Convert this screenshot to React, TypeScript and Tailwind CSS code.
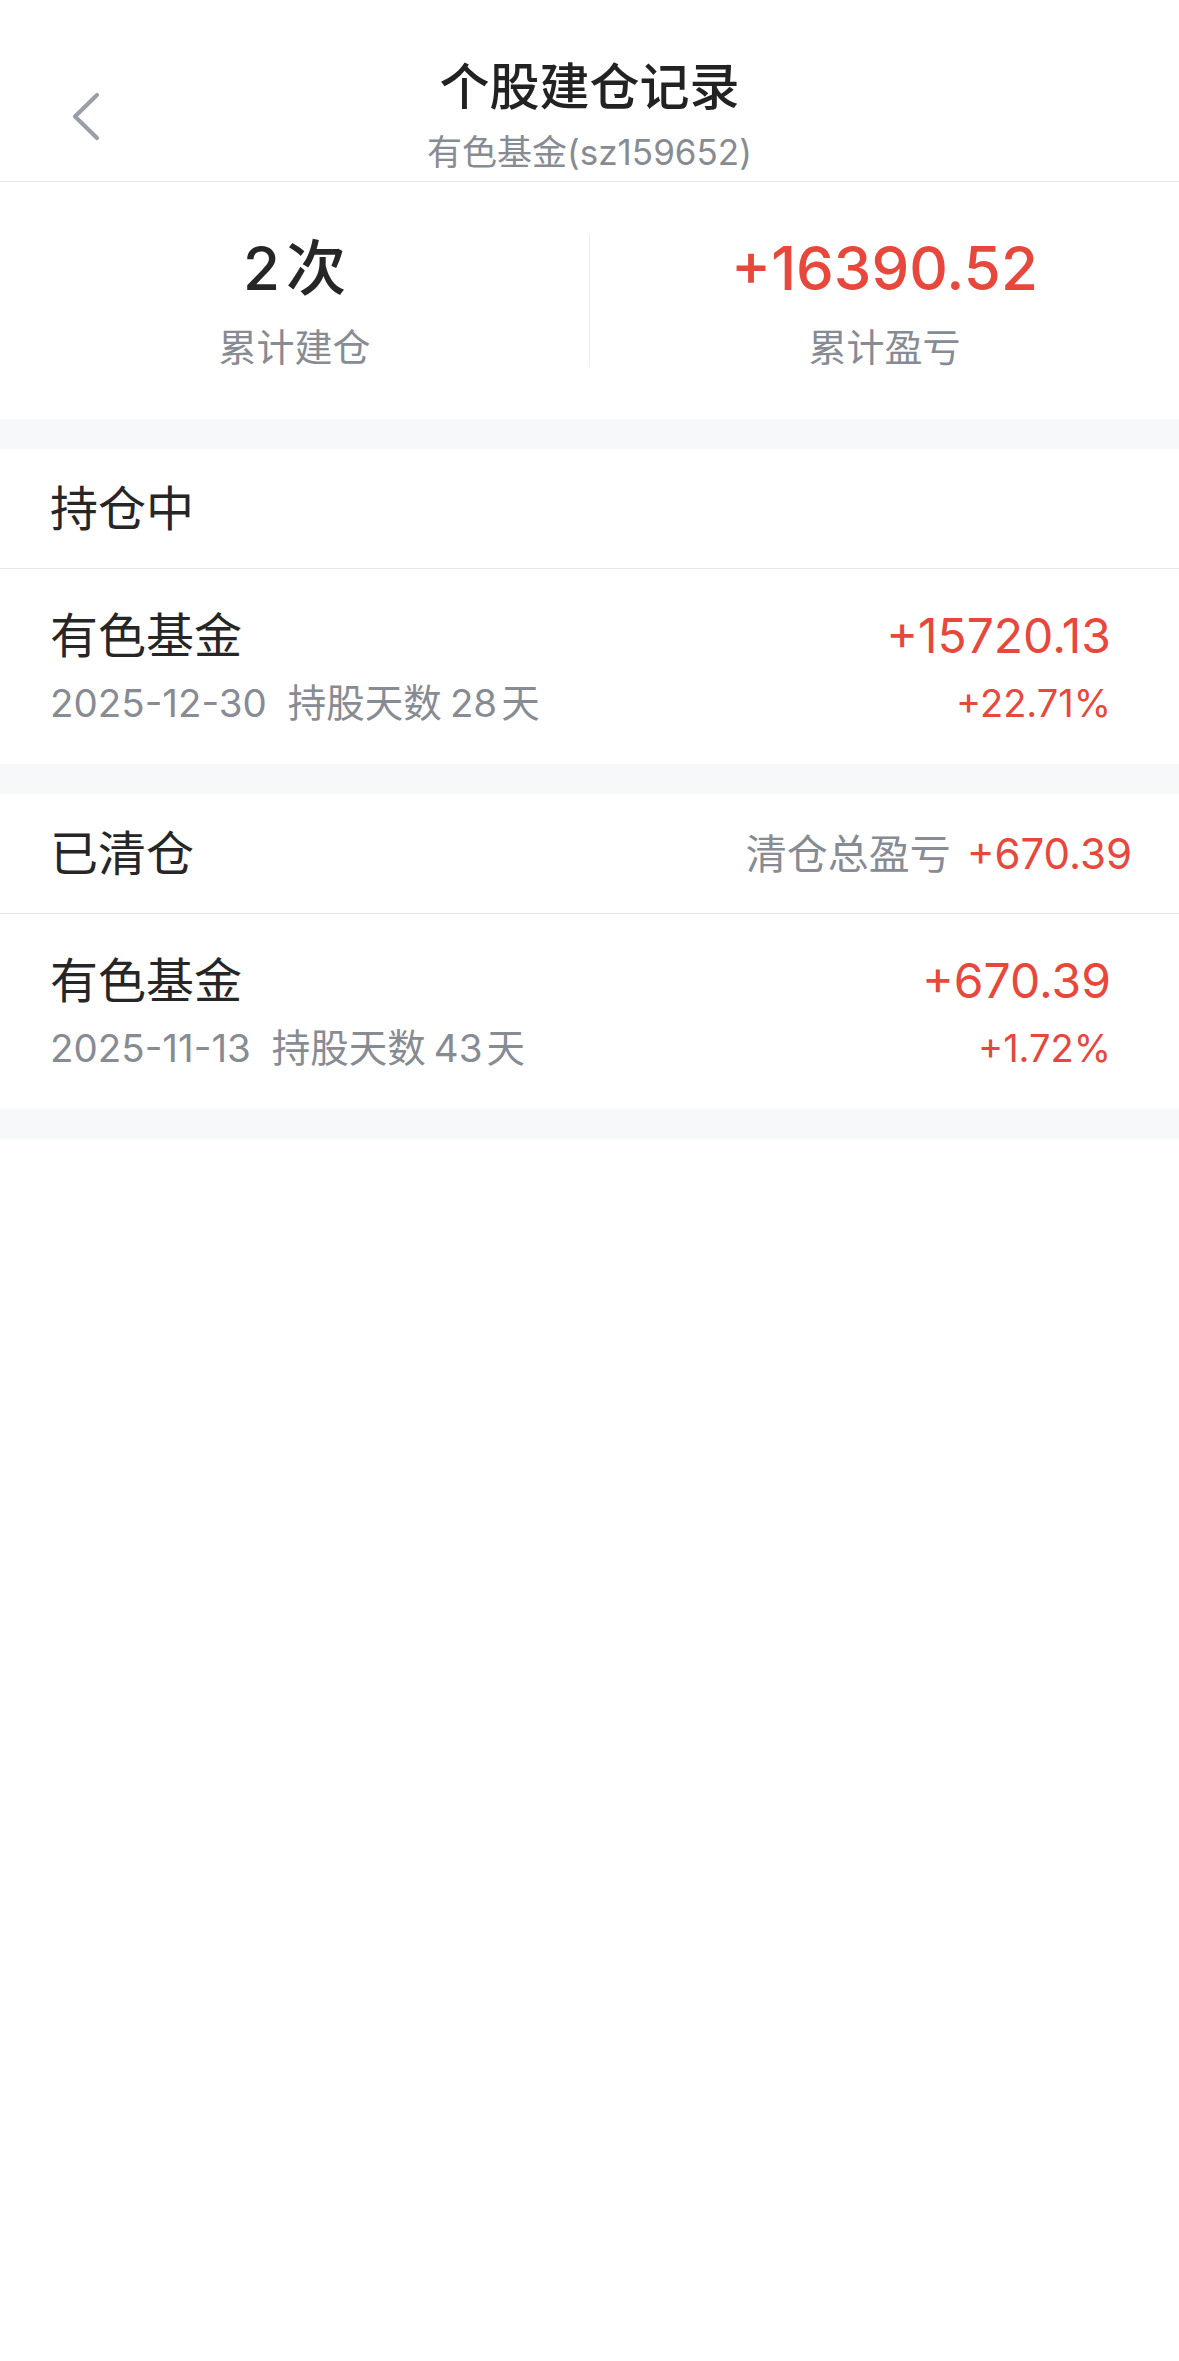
const ChevronLeft = () => (
    <svg width="30" height="50" viewBox="0 0 30 50" fill="none">
        <path d="M26 4 L4 25.5 L26 47" stroke="#9a9ea8" strokeWidth="4.2" strokeLinecap="round" strokeLinejoin="round" />
    </svg>
)

const StatCell = ({ value, label, red }: { value: React.ReactNode; label: string; red?: boolean }) => (
    <div className="flex flex-col items-center gap-[20px]">
        <div className={`text-[60px] leading-[72px] font-medium ${red ? "text-[#e8483b]" : "text-[#262626]"}`}>
            {value}
        </div>
        <div className="text-[38px] leading-[46px] text-[#878b94]">{label}</div>
    </div>
)

interface RecordItem {
    name: string
    date: string
    days: number
    profit: string
    rate: string
}

const RecordRow = ({ item }: { item: RecordItem }) => (
    <div className="flex h-[195px] items-center justify-between pl-[50px] pr-[68px]">
        <div className="flex flex-col gap-[16px]">
            <div className="text-[48px] leading-[56px] text-[#262626]">{item.name}</div>
            <div className="flex text-[38.5px] leading-[46px] text-[#878b94]">
                <span>{item.date}</span>
                <span className="ml-[21px]">持股天数</span>
                <span className="ml-[8px]">{item.days}</span>
                <span className="ml-[4px]">天</span>
            </div>
        </div>
        <div className="flex flex-col items-end gap-[16px] text-[#e8483b]">
            <div className="text-[48px] leading-[56px]">{item.profit}</div>
            <div className="text-[38px] leading-[46px]">{item.rate}</div>
        </div>
    </div>
)

const SectionHeader = ({ title, children }: { title: string; children?: React.ReactNode }) => (
    <div className="flex h-[120px] items-center justify-between border-b border-[#e8e8ea] pl-[50px] pr-[47px]">
        <div className="text-[48px] leading-[56px] text-[#262626]">{title}</div>
        {children}
    </div>
)

const Band = () => <div className="h-[30px] bg-[#f7f8fa]" />

export default function App() {
    const holding: RecordItem = {
        name: "有色基金",
        date: "2025-12-30",
        days: 28,
        profit: "+15720.13",
        rate: "+22.71%",
    }
    const cleared: RecordItem = {
        name: "有色基金",
        date: "2025-11-13",
        days: 43,
        profit: "+670.39",
        rate: "+1.72%",
    }

    return (
        <div className="min-h-screen bg-white font-['Inter','Noto_Sans_CJK_SC',sans-serif]">
            {/* nav */}
            <div className="grid h-[182px] grid-cols-[240px_1fr_240px] items-center border-b border-[#e6e6e8] pt-[50px]">
                <div className="flex pl-[71px]">
                    <ChevronLeft />
                </div>
                <div className="flex flex-col items-center">
                    <div className="text-[50px] leading-[60px] font-medium text-[#222]">个股建仓记录</div>
                    <div className="mt-[13px] text-[35px] leading-[44px] text-[#878b94]">有色基金(sz159652)</div>
                </div>
                <div />
            </div>

            {/* summary */}
            <div className="grid h-[237px] grid-cols-[1fr_1px_1fr] items-center">
                <StatCell
                    value={
                        <span className="flex items-center">
                            <span>2</span>
                            <span className="ml-[6px]">次</span>
                        </span>
                    }
                    label="累计建仓"
                />
                <div className="h-[133px] bg-[#efeff1]" />
                <StatCell value="+16390.52" label="累计盈亏" red />
            </div>

            <Band />
            <SectionHeader title="持仓中" />
            <RecordRow item={holding} />

            <Band />
            <SectionHeader title="已清仓">
                <div className="flex items-center">
                    <span className="text-[41px] leading-[48px] text-[#878b94]">清仓总盈亏</span>
                    <span className="ml-[16px] text-[42px] leading-[48px] text-[#e8483b]">+670.39</span>
                </div>
            </SectionHeader>
            <RecordRow item={cleared} />
            <Band />
        </div>
    )
}
